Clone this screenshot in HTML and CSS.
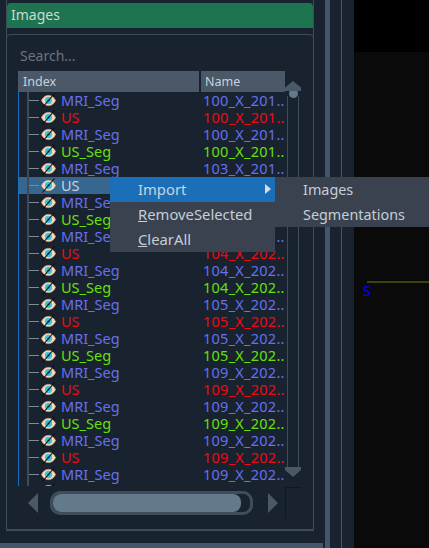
FILE: index.html
```html
<!DOCTYPE html>
<html>
<head>
<meta charset="utf-8">
<title>Images</title>
<link rel="stylesheet" href="styles.css">
</head>
<body>
<svg class="defs" width="0" height="0"><defs>
<symbol id="eye" viewBox="0 0 15 15">
<path d="M.5 7.5C2.5 3.6 5 2.4 7.5 2.4S12.5 3.6 14.5 7.5C12.5 11.4 10 12.6 7.5 12.6S2.5 11.4 .5 7.5Z" fill="#fbdcbc" stroke="#f0b484" stroke-width=".7"/>
<circle cx="7.5" cy="7.5" r="3.7" fill="#3cc4e0"/>
<circle cx="7.5" cy="7.5" r="1.3" fill="#1a7c9c"/>
<path d="M1.5 14.5L13.5 .5" stroke="#0b0e12" stroke-width="1.1"/>
</symbol>
</defs></svg>
<div class="app">
  <div class="left">
    <div class="dock">
      <div class="title">Images</div>
      <div class="panel">
        <div class="search">Search...</div>
        <div class="tablewrap">
          <div class="table">
            <div class="head"><div class="h-index">Index</div><div class="h-name">Name</div></div>
            <div class="rows">
              <div class="row blue"><span class="tree"></span><svg class="ic"><use href="#eye"/></svg><span class="i">MRI_Seg</span><span class="n">100_X_201..</span></div>
              <div class="row red"><span class="tree"></span><svg class="ic"><use href="#eye"/></svg><span class="i">US</span><span class="n">100_X_201..</span></div>
              <div class="row blue"><span class="tree"></span><svg class="ic"><use href="#eye"/></svg><span class="i">MRI_Seg</span><span class="n">100_X_201..</span></div>
              <div class="row green"><span class="tree"></span><svg class="ic"><use href="#eye"/></svg><span class="i">US_Seg</span><span class="n">100_X_201..</span></div>
              <div class="row blue"><span class="tree"></span><svg class="ic"><use href="#eye"/></svg><span class="i">MRI_Seg</span><span class="n">103_X_201..</span></div>
              <div class="row sel"><span class="tree"></span><svg class="ic"><use href="#eye"/></svg><span class="i">US</span><span class="n">103_X_201..</span></div>
              <div class="row blue"><span class="tree"></span><svg class="ic"><use href="#eye"/></svg><span class="i">MRI_Seg</span><span class="n">103_X_201..</span></div>
              <div class="row green"><span class="tree"></span><svg class="ic"><use href="#eye"/></svg><span class="i">US_Seg</span><span class="n">103_X_201..</span></div>
              <div class="row blue"><span class="tree"></span><svg class="ic"><use href="#eye"/></svg><span class="i">MRI_Seg</span><span class="n">103_X_201..</span></div>
              <div class="row red"><span class="tree"></span><svg class="ic"><use href="#eye"/></svg><span class="i">US</span><span class="n">104_X_202..</span></div>
              <div class="row blue"><span class="tree"></span><svg class="ic"><use href="#eye"/></svg><span class="i">MRI_Seg</span><span class="n">104_X_202..</span></div>
              <div class="row green"><span class="tree"></span><svg class="ic"><use href="#eye"/></svg><span class="i">US_Seg</span><span class="n">104_X_202..</span></div>
              <div class="row blue"><span class="tree"></span><svg class="ic"><use href="#eye"/></svg><span class="i">MRI_Seg</span><span class="n">105_X_202..</span></div>
              <div class="row red"><span class="tree"></span><svg class="ic"><use href="#eye"/></svg><span class="i">US</span><span class="n">105_X_202..</span></div>
              <div class="row blue"><span class="tree"></span><svg class="ic"><use href="#eye"/></svg><span class="i">MRI_Seg</span><span class="n">105_X_202..</span></div>
              <div class="row green"><span class="tree"></span><svg class="ic"><use href="#eye"/></svg><span class="i">US_Seg</span><span class="n">105_X_202..</span></div>
              <div class="row blue"><span class="tree"></span><svg class="ic"><use href="#eye"/></svg><span class="i">MRI_Seg</span><span class="n">109_X_202..</span></div>
              <div class="row red"><span class="tree"></span><svg class="ic"><use href="#eye"/></svg><span class="i">US</span><span class="n">109_X_202..</span></div>
              <div class="row blue"><span class="tree"></span><svg class="ic"><use href="#eye"/></svg><span class="i">MRI_Seg</span><span class="n">109_X_202..</span></div>
              <div class="row green"><span class="tree"></span><svg class="ic"><use href="#eye"/></svg><span class="i">US_Seg</span><span class="n">109_X_202..</span></div>
              <div class="row blue"><span class="tree"></span><svg class="ic"><use href="#eye"/></svg><span class="i">MRI_Seg</span><span class="n">109_X_202..</span></div>
              <div class="row red"><span class="tree"></span><svg class="ic"><use href="#eye"/></svg><span class="i">US</span><span class="n">109_X_202..</span></div>
              <div class="row blue"><span class="tree"></span><svg class="ic"><use href="#eye"/></svg><span class="i">MRI_Seg</span><span class="n">109_X_202..</span></div>
              <div class="row cut"><span class="tree"></span><svg class="ic"><use href="#eye"/></svg></div>
            </div>
          </div>
          <div class="vbar">
            <div class="up"></div>
            <div class="knob"></div>
            <div class="vtrack"></div>
            <div class="down"></div>
          </div>
        </div>
        <div class="hbar">
          <div class="a-left"></div>
          <div class="htrack"><div class="hthumb"></div></div>
          <div class="a-right"></div>
          <div class="corner"></div>
        </div>
      </div>
    </div>
    <div class="bottom"></div>
  </div>
  <div class="splitters">
    <div class="bar"></div>
    <div class="thin"></div>
  </div>
  <div class="view">
    <div class="vline"></div>
    <div class="vs">S</div>
  </div>
</div>
<div class="menu">
  <div class="mi on">Import<span class="caret"></span></div>
  <div class="mi"><u>R</u>emoveSelected</div>
  <div class="mi"><u>C</u>learAll</div>
</div>
<div class="submenu">
  <div class="si">Images</div>
  <div class="si">Segmentations</div>
</div>
</body>
</html>
```
FILE: styles.css
```css
html, body { margin: 0; padding: 0; width: 429px; height: 548px; overflow: hidden; background: #19232f; }
body { font-family: "Noto Sans", "Open Sans", sans-serif; color: #c5ced6; position: relative; }
.defs { position: absolute; }
.app { display: flex; width: 429px; height: 548px; }
.left { width: 325px; height: 548px; display: flex; flex-direction: column; flex: none; }
.dock { height: 528px; flex: none; margin-left: 6px; width: 306px; border-left: 1px solid #3e4c5c; border-right: 1px solid #3e4c5c; padding-top: 3px; }
.title { height: 25px; background: #1e7350; border-radius: 4px 4px 0 0; font-size: 14px; line-height: 24px; padding-left: 4px; color: #c8dcd2; }
.panel { margin: 6px -1px 0; height: 497px; box-sizing: border-box; border: 1px solid #3e4c5c; border-bottom-width: 2px; border-radius: 5px 5px 0 0; padding: 0 11px; }
.search { height: 36px; padding: 11px 2px 0; box-sizing: border-box; font-size: 14px; line-height: 20px; color: #6a747e; }
.tablewrap { display: flex; height: 416px; }
.table { width: 267px; flex: none; }
.head { display: flex; height: 21px; background: #4a5868; font-size: 12.5px; line-height: 21px; color: #c8d2dc; }
.h-index { width: 181px; padding-left: 5px; box-sizing: border-box; }
.h-name { flex: 1; border-left: 2px solid #19232f; padding-left: 4px; }
.rows { border-left: 1px solid #1a6fb8; height: 394px; overflow: hidden; width: 272px; }
.row { height: 17px; display: flex; align-items: center; font-size: 14.5px; line-height: 17px; white-space: nowrap; }
.tree { width: 12px; height: 17px; flex: none; box-sizing: border-box; margin: 0 2px 0 8px; border-left: 2px solid #3e4a58; position: relative; }
.tree::after { content: ""; position: absolute; left: 0; top: 8px; width: 10px; height: 1px; background: #7e8a94; }
.ic { width: 15px; height: 15px; flex: none; }
.i { width: 141px; margin: -1px 0 0 5px; flex: none; }
.n { margin: -1px 0 0 1px; letter-spacing: .25px; }
.blue { color: #6670f0; }
.red { color: #ee0a14; }
.green { color: #66e00a; }
.sel { background: #37668f; color: #c8d2dc; width: 267px; }
.cut { height: 3px; overflow: hidden; align-items: flex-start; }
.vbar { width: 16px; flex: none; margin-top: 10px; display: flex; flex-direction: column; align-items: center; }
.up { width: 16px; height: 10px; flex: none; background: #4a5868; clip-path: polygon(50% 0, 100% 65%, 100% 100%, 0 100%, 0 65%); }
.knob { width: 9px; height: 9px; flex: none; border-radius: 50%; background: #627a8c; margin-top: -2px; }
.vtrack { width: 12px; flex: 1; box-sizing: border-box; border-left: 1px solid #3e4c5c; border-right: 1px solid #3e4c5c; margin-top: -2px; }
.down { width: 16px; height: 10px; flex: none; background: #4a5868; clip-path: polygon(0 0, 100% 0, 100% 30%, 50% 100%, 0 30%); margin-bottom: 10px; }
.hbar { display: flex; align-items: center; height: 24px; margin-top: 4px; }
.a-left { width: 0; height: 0; border-top: 10px solid transparent; border-bottom: 10px solid transparent; border-right: 10px solid #4a5868; margin-left: 10px; }
.htrack { width: 203px; height: 24px; flex: none; box-sizing: border-box; border: 3px solid #3e4c5c; border-radius: 10px; margin-left: 12px; }
.hthumb { width: 188px; height: 18px; background: #627a8c; border-radius: 8px; }
.a-right { width: 0; height: 0; border-top: 10px solid transparent; border-bottom: 10px solid transparent; border-left: 10px solid #4a5868; margin-left: 15px; }
.corner { width: 16px; height: 32px; flex: none; box-sizing: border-box; border-left: 1px solid #10171f; border-top: 1px solid #10171f; margin-left: 7px; }
.bottom { height: 5px; margin: 12px 2px 0 0; background: #46566a; flex: none; }
.splitters { width: 29px; flex: none; display: flex; }
.bar { width: 5px; height: 548px; background: #46566a; }
.thin { width: 1px; height: 548px; background: #46566a; margin-left: 11px; }
.view { flex: 1; background: #0a0a0a; position: relative; border-top: 52px solid #000; }
.vline { position: absolute; left: 13px; right: 0; top: 229px; height: 2px; background: #3f3f10; }
.vs { position: absolute; left: 9px; top: 231px; color: #0000f5; font-size: 14px; line-height: 16px; font-weight: 500; }
.menu { position: absolute; left: 110px; top: 177px; width: 165px; height: 75px; background: #3a4250; font-size: 14.8px; }
.mi { height: 25px; line-height: 25px; padding-left: 28px; position: relative; color: #c5ced6; }
.mi.on { background: #1a6fb8; color: #c5d5e2; }
.caret { position: absolute; right: 4px; top: 7px; width: 0; height: 0; border-top: 5px solid transparent; border-bottom: 5px solid transparent; border-left: 6px solid #d5dde4; }
.submenu { position: absolute; left: 275px; top: 177px; width: 154px; height: 50px; background: #3a4250; font-size: 14.4px; }
.si { height: 25px; line-height: 25px; padding-left: 28px; color: #c5ced6; }
```
